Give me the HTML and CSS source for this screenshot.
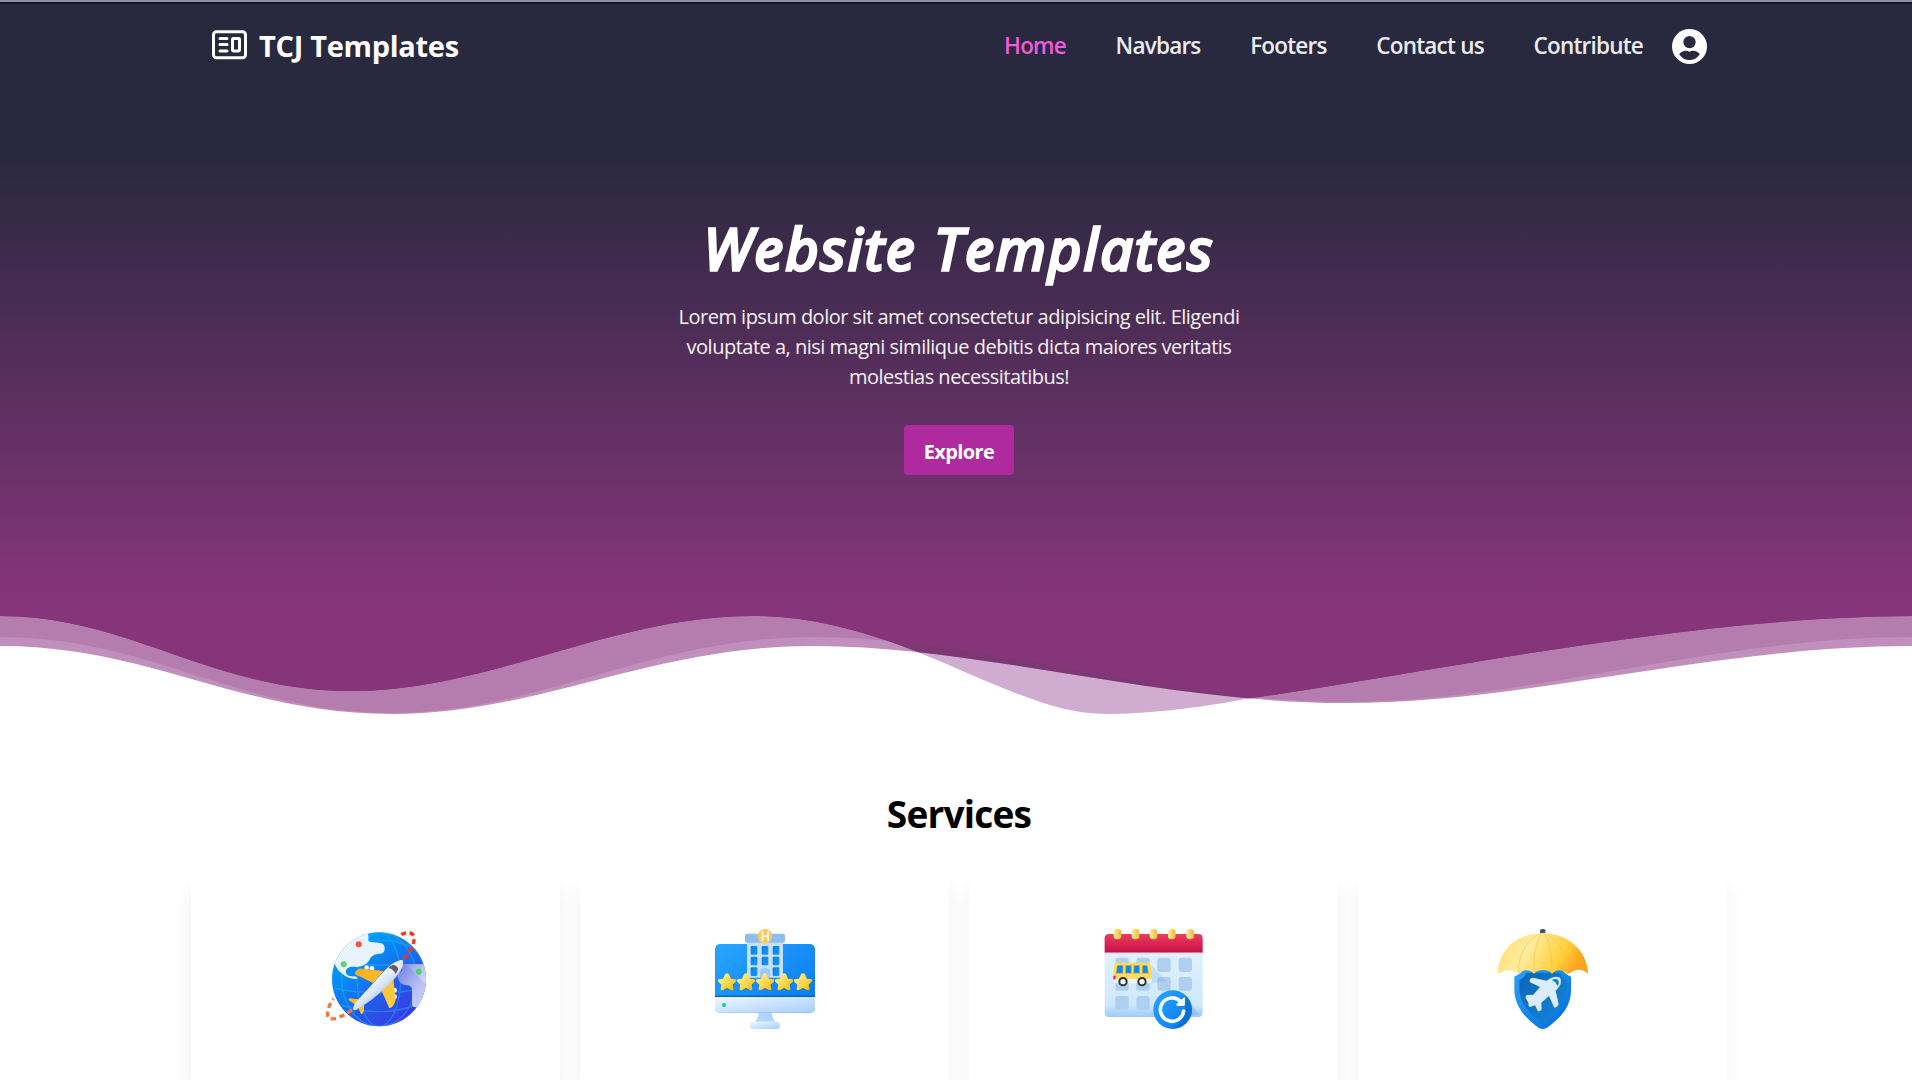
FILE: index.html
```html
<!DOCTYPE html>
<html lang="en">
<head>
<meta charset="utf-8">
<title>TCJ Templates</title>
<link rel="stylesheet" href="styles.css">
</head>
<body>
<section class="hero">
  <header class="navbar">
    <a class="brand">
      <svg class="brand-icon" viewBox="0 0 35 30" fill="none" stroke="#fff" stroke-width="3">
        <rect x="1.5" y="1.8" width="32" height="26" rx="3"/>
        <path d="M8 8.6h7M8 14.6h7M8 20.9h7" stroke-linecap="round"/>
        <rect x="20.5" y="8.5" width="7" height="12.4" rx=".8"/>
      </svg>
      <span>TCJ Templates</span>
    </a>
    <nav class="links">
      <a class="active">Home</a>
      <a>Navbars</a>
      <a>Footers</a>
      <a>Contact us</a>
      <a>Contribute</a>
    </nav>
    <svg class="avatar" viewBox="0 0 34 34">
      <circle cx="17" cy="17" r="17" fill="#fff"/>
      <circle cx="17" cy="12.7" r="6" fill="#28283e"/>
      <path d="M7 24.5C9 21 14 20.2 17 22C20 20.2 25 21 27 24.5C24.5 28.3 21 30.2 17 30.2S9.500 28.300 7 24.500Z" fill="#28283e"/>
    </svg>
  </header>
  <div class="intro">
    <h1>Website Templates</h1>
    <p>Lorem ipsum dolor sit amet consectetur adipisicing elit. Eligendi<br>voluptate a, nisi magni similique debitis dicta maiores veritatis<br>molestias necessitatibus!</p>
    <a class="button">Explore</a>
  </div>
  <svg class="waves" viewBox="0 610 1912 110" preserveAspectRatio="none">
    <defs>
      <clipPath id="front"><path d="M0 616C130 616 210 691 352 691C490 691 610 616 753 616C900 616 1010 714 1105 714C1170 714 1240 700 1246 699C1450 669 1690 617 1912 616V600H0Z"/></clipPath>
    </defs>
    <rect y="610" width="1912" height="110" fill="#fff"/>
    <path fill="#d0acd1" d="M0 616C130 616 210 691 352 691C490 691 610 616 753 616C900 616 1010 714 1105 714C1170 714 1240 700 1246 699C1450 669 1690 617 1912 616V600H0Z"/>
    <path fill="#c08fbe" d="M0 646C150 646 240 714 392 714C540 714 650 646 814 646C980 646 1160 703 1344 703C1530 703 1710 646 1912 646V600H0Z"/>
    <path fill="#b57dae" d="M0 637C150 637 240 713 392 713C540 713 650 637 814 637C980 637 1160 702 1344 702C1530 702 1710 637 1912 637V600H0Z"/>
    <g clip-path="url(#front)">
      <path fill="#7d3873" d="M0 646C150 646 240 714 392 714C540 714 650 646 814 646C980 646 1160 703 1344 703C1530 703 1710 646 1912 646V600H0Z"/>
      <path fill="#86357b" d="M0 637C150 637 240 713 392 713C540 713 650 637 814 637C980 637 1160 702 1344 702C1530 702 1710 637 1912 637V600H0Z"/>
    </g>
  </svg>
</section>

<section class="services">
  <h2>Services</h2>
  <div class="cards">
    <article class="card">
      <svg viewBox="48 57 300 300">
        <defs>
          <linearGradient id="sea" x1="0" y1="0" x2=".8" y2="1"><stop offset="0" stop-color="#00b2ff"/><stop offset=".35" stop-color="#058cf5"/><stop offset=".75" stop-color="#2b55eb"/><stop offset="1" stop-color="#4432ee"/></linearGradient>
          <linearGradient id="land" x1="0" y1="0" x2="1" y2="1"><stop offset="0" stop-color="#7d83e8"/><stop offset=".6" stop-color="#ccd6fa"/><stop offset="1" stop-color="#e4edff"/></linearGradient>
          <linearGradient id="fuselage" x1=".3" y1=".3" x2=".65" y2=".7"><stop offset="0" stop-color="#f6fbff"/><stop offset=".6" stop-color="#dce7fb"/><stop offset="1" stop-color="#a9bbe8"/></linearGradient>
          <linearGradient id="wing" x1="0" y1="0" x2="1" y2="1"><stop offset="0" stop-color="#f9aa16"/><stop offset="1" stop-color="#ffd34a"/></linearGradient>
          <clipPath id="globe"><circle cx="207" cy="208" r="141"/></clipPath>
        </defs>
        <circle cx="207" cy="208" r="141" fill="url(#sea)"/>
        <g clip-path="url(#globe)">
          <g fill="none" stroke="#18b5fa" stroke-width="4" opacity=".55">
            <ellipse cx="207" cy="208" rx="65" ry="141"/><ellipse cx="207" cy="208" rx="112" ry="141"/>
            <path d="M66 165H348M73 235Q207 262 341 235M95 285Q207 325 320 285M100 115Q207 65 315 115"/>
          </g>
          <path d="M60 50H165C176 65 176 80 175 92C184 99 196 95 211 99C230 103 227 128 214 131C191 131 183 138 178 151C168 166 153 171 138 171C121 168 108 174 108 184C107 196 118 200 132 199Q142 200 142 207Q115 209 95 190Q60 170 60 50Z" fill="#e8f3ff"/>
          <path d="M272 165Q276 161 285 162H355V292H317Q305 291 306 282V238Q303 225 288 226C266 222 258 198 266 190Q284 184 272 165Z" fill="url(#land)"/>
          <path d="M282 155L354 230V320L250 350H170L130 300L184 215L150 202Z" fill="#293ccb" opacity=".12"/>
        </g>
        <circle cx="146" cy="103" r="9" fill="#ff5339"/><circle cx="101" cy="163" r="9" fill="#62d56a"/><circle cx="326" cy="185" r="9" fill="#56cd68"/>
        <g fill="#fff"><circle cx="170" cy="173" r="7"/><circle cx="186" cy="175" r="7"/><circle cx="254" cy="241" r="7"/><circle cx="254" cy="260" r="7"/></g>
        <path d="M135 187Q145 174 158 176L221 183L189 219L134 192ZM250 206L257 270Q251 293 238 295L214 240ZM115 269Q119 262 130 266L147 268L138 286ZM145 292L162 282V301Q160 311 153 313Z" fill="url(#wing)"/>
        <path d="M130 299Q127 293 138 276L207 200Q247 152 277 149Q284 157 273 180C254 213 192 270 142 297Q134 303 130 299Z" fill="url(#fuselage)"/>
        <path d="M235 174Q241 166 250 164Q263 168 265 177L257 192Q251 177 235 174Z" fill="#6c5760"/>
        <path d="M283 147Q312 108 312 89C315 63 288 64 270 76" fill="none" stroke="#ff2f18" stroke-width="10" stroke-dasharray="15 11"/>
        <path d="M126 300C99 318 75 330 59 326C43 315 59 280 71 266" fill="none" stroke="#ff7045" stroke-width="10" stroke-dasharray="16 11"/>
      </svg>
    </article>
    <article class="card">
      <svg viewBox="45 57 300 300">
        <defs>
          <linearGradient id="screen" x1="0" y1="0" x2="1" y2="1"><stop offset="0" stop-color="#29a7ff"/><stop offset="1" stop-color="#0675ed"/></linearGradient>
          <linearGradient id="pale" x1="0" y1="0" x2="1" y2="1"><stop offset="0" stop-color="#f0f8ff"/><stop offset="1" stop-color="#a7ceff"/></linearGradient>
          <linearGradient id="star" x1="0" y1="0" x2="1" y2="1"><stop offset="0" stop-color="#fff4a8"/><stop offset=".55" stop-color="#ffd748"/><stop offset="1" stop-color="#f4b500"/></linearGradient>
          <linearGradient id="window" x1="0" y1="0" x2="1" y2="1"><stop offset="0" stop-color="#087fdf"/><stop offset="1" stop-color="#1a96ff"/></linearGradient>
          <path id="rating" d="M0-25Q4-28 7-21L12-10L25-8Q30-6 26-1L17 8L19 20Q19 27 12 24L0 18L-12 24Q-19 27-19 20L-17 8L-26-1Q-30-6-25-8L-12-10L-7-21Q-4-28 0-25Z" fill="url(#star)"/>
        </defs>
        <path d="M176 305H215Q216 324 225 335H166Q176 324 176 305Z" fill="#b0d3ff"/>
        <rect x="150" y="335" width="90" height="22" rx="10" fill="url(#pale)"/>
        <rect x="45" y="102" width="300" height="206" rx="15" fill="url(#screen)"/>
        <path d="M45 259H345V293Q345 308 330 308H60Q45 308 45 293Z" fill="url(#pale)"/><path d="M45 257H345V261H45Z" fill="#075dc3"/>
        <path d="M141 96H249V203H141Z" fill="#c6e1ff"/><rect x="135" y="71" width="120" height="27" rx="6" fill="#8dbdf1"/>
        <g fill="url(#window)"><rect x="152" y="108" width="20" height="26" rx="3"/><rect x="185" y="108" width="20" height="26" rx="3"/><rect x="218" y="108" width="20" height="26" rx="3"/><rect x="152" y="140" width="20" height="26" rx="3"/><rect x="185" y="140" width="20" height="26" rx="3"/><rect x="218" y="140" width="20" height="26" rx="3"/><rect x="152" y="172" width="20" height="26" rx="3"/><rect x="218" y="172" width="20" height="26" rx="3"/></g>
        <path d="M180 203V184Q181 174 195 174Q209 174 210 184V203Z" fill="#9bc9fc"/>
        <circle cx="195" cy="79" r="22" fill="#ffc75b"/><path d="M187 67V91M204 67V91M187 79H204" fill="none" stroke="#fff8df" stroke-width="6" stroke-linecap="round"/>
        <g fill="#003f92" opacity=".25"><circle cx="85" cy="221" r="19"/><circle cx="142" cy="221" r="19"/><circle cx="198" cy="221" r="19"/><circle cx="255" cy="221" r="19"/><circle cx="312" cy="221" r="19"/></g>
        <use href="#rating" x="81" y="216"/><use href="#rating" x="138" y="216"/><use href="#rating" x="195" y="216"/><use href="#rating" x="252" y="216"/><use href="#rating" x="309" y="216"/>
        <circle cx="72" cy="285" r="6" fill="#00d889"/>
      </svg>
    </article>
    <article class="card">
      <svg viewBox="43 57 300 300">
        <defs>
          <linearGradient id="sheet" x1="0" y1="0" x2="0" y2="1"><stop offset="0" stop-color="#e6f5ff"/><stop offset=".85" stop-color="#cfe8ff"/><stop offset="1" stop-color="#9ccafb"/></linearGradient>
          <linearGradient id="red" x1="0" y1="0" x2="0" y2="1"><stop offset="0" stop-color="#ee3b5e"/><stop offset="1" stop-color="#c51147"/></linearGradient>
          <linearGradient id="ring" x1="0" y1="0" x2="1" y2="0"><stop offset="0" stop-color="#ffef9b"/><stop offset="1" stop-color="#eebb32"/></linearGradient>
        </defs>
        <rect x="45" y="72" width="294" height="249" rx="13" fill="url(#sheet)"/>
        <path d="M58 72H326Q339 72 339 85V128H45V85Q45 72 58 72Z" fill="url(#red)"/><path d="M45 128H339" stroke="#ff91ab" stroke-width="2"/>
        <g fill="url(#ring)"><rect x="72" y="57" width="23" height="31" rx="10"/><rect x="126" y="57" width="23" height="31" rx="10"/><rect x="180" y="57" width="23" height="31" rx="10"/><rect x="235" y="57" width="23" height="31" rx="10"/><rect x="290" y="57" width="23" height="31" rx="10"/></g>
        <g fill="#aecff0"><rect x="77" y="143" width="40" height="43" rx="8"/><rect x="140" y="143" width="40" height="43" rx="8"/><rect x="203" y="143" width="40" height="43" rx="8"/><rect x="267" y="143" width="40" height="43" rx="8"/><rect x="77" y="201" width="40" height="41" rx="8"/><rect x="140" y="201" width="40" height="41" rx="8"/><rect x="203" y="201" width="40" height="41" rx="8"/><rect x="267" y="201" width="40" height="41" rx="8"/><rect x="77" y="258" width="40" height="42" rx="8"/><rect x="140" y="258" width="40" height="42" rx="8"/></g>
        <path d="M183 164L232 215L150 222Z" fill="#5c96d8" opacity=".18"/>
        <path d="M80 158H173Q183 159 184 174L186 197V214H72L71 194L74 167Q74 158 80 158Z" fill="#ffdc5b"/><path d="M72 207H186V211Q186 220 178 220H79Q71 220 71 211Z" fill="#e6f3ff"/>
        <path d="M83 166H100V190H79ZM108 166H125V190H107ZM133 166H150V190H132ZM158 166H169Q174 166 174 172L176 190H158Z" fill="#118aed" stroke="#f1ae27" stroke-width="2"/>
        <rect x="71" y="197" width="7" height="11" fill="#f02b62"/>
        <g fill="#f4f8ff" stroke="#30323c" stroke-width="6"><circle cx="100" cy="215" r="11"/><circle cx="157" cy="215" r="11"/></g>
        <path d="M288 265L330 313L294 321Z" fill="#5b9bdc" opacity=".3"/>
        <circle cx="249" cy="299" r="58" fill="url(#screen)"/><path d="M290 258Q319 292 300 325Q282 354 248 356Q276 340 284 312Z" fill="#0055b5" opacity=".4"/>
        <path d="M282 303A35 35 0 1 1 272 274" fill="none" stroke="#f4faff" stroke-width="11" stroke-linecap="round"/><path d="M283 262Q286 261 286 267V284Q285 288 280 288H264Q256 285 263 280Z" fill="#f4faff"/>
      </svg>
    </article>
    <article class="card">
      <svg viewBox="40 57 300 300">
        <defs>
          <linearGradient id="canopy" x1="0" y1="0" x2="1" y2=".25"><stop offset="0" stop-color="#ffdc74"/><stop offset=".4" stop-color="#ffec9d"/><stop offset=".8" stop-color="#ffcf38"/><stop offset="1" stop-color="#ffa420"/></linearGradient>
          <linearGradient id="shield" x1="0" y1="0" x2="1" y2="1"><stop offset="0" stop-color="#2aa2fa"/><stop offset="1" stop-color="#006bdb"/></linearGradient>
          <linearGradient id="inner" x1="0" y1="0" x2="1" y2="1"><stop offset="0" stop-color="#0965b5"/><stop offset="1" stop-color="#1686e0"/></linearGradient>
        </defs>
        <path d="M104 200Q122 193 130 180H248Q256 193 274 200V242C273 293 241 325 202 353Q189 361 177 353C133 323 105 285 104 240Z" fill="url(#shield)"/>
        <path d="M119 211Q132 205 140 188H239Q247 205 261 211V242C259 281 228 316 190 340C150 312 120 277 119 240Z" fill="url(#inner)"/>
        <path d="M181 70V61Q181 57 189 57Q197 57 197 61V70Z" fill="#48525f"/>
        <path d="M54 191C58 117 113 70 189 70S321 119 326 191C310 179 294 175 279 184Q270 192 263 191C250 179 231 175 217 191C207 178 178 175 163 191C148 177 129 178 118 192C105 179 81 178 72 184Q62 189 54 191Z" fill="url(#canopy)"/>
        <path d="M163 190C162 135 169 99 183 72M217 190C216 139 211 94 195 72M118 190C112 137 144 90 176 74M263 190C263 135 242 99 205 74" fill="none" stroke="#f3c24c" stroke-width="2"/>
        <path d="M201 212C217 198 240 196 243 207C246 220 240 231 228 242L237 283Q232 295 223 292L208 258L185 278L186 297Q180 307 174 302L166 286L151 291Q144 290 147 280L138 264Q137 254 145 255L161 254L181 231L151 217Q147 205 159 203Z" fill="#dcecff"/>
        <path d="M216 210Q233 202 237 214Q239 222 233 228Q229 215 216 210Z" fill="#087ce0"/>
      </svg>
    </article>
  </div>
</section>
</body>
</html>
```
FILE: styles.css
```css
* { box-sizing: border-box; }
html { overflow: hidden; background: #fff; }
body {
  margin: 0;
  height: 1080px;
  overflow: hidden;
  font-family: "Open Sans", "Noto Sans", sans-serif;
}
.hero {
  height: 720px;
  display: flex;
  flex-direction: column;
  color: #fff;
  border-top: 2px solid #9191a8;
  background: linear-gradient(#28283e 0, #28283e 148px, #86357b 598px);
  box-shadow: inset 0 2px #131326;
}
.navbar {
  height: 88px;
  padding: 0 205px 0 212px;
  display: flex;
  align-items: center;
}
.brand {
  display: flex;
  align-items: center;
  gap: 12px;
  margin-right: auto;
  font-size: 29px;
  font-weight: 700;
  line-height: 40px;
  letter-spacing: -.3px;
}
.brand-icon { width: 35px; height: 30px; margin-top: -2px; }
.links {
  display: flex;
  gap: 49.6px;
  font-size: 22.5px;
  font-weight: 600;
  line-height: 32px;
  letter-spacing: -.78px;
  color: #ececf0;
}
.active { color: #ec5bd8; }
.avatar { width: 35px; height: 35px; margin-left: 29px; }
.intro {
  padding: 113px 0 0 6px;
  display: flex;
  flex-direction: column;
  align-items: center;
  text-align: center;
}
h1 {
  margin: 0;
  font-size: 57px;
  line-height: 90px;
  font-style: italic;
  font-weight: 500;
  letter-spacing: 2.5px;
  -webkit-text-stroke: 3.4px #fff;
  stroke-linejoin: round;
}
p {
  margin: 9px 0 0;
  font-size: 20px;
  line-height: 30px;
  letter-spacing: -.5px;
  color: #f6f2f6;
}
.button {
  width: 110px;
  height: 50px;
  margin-top: 33px;
  border-radius: 4px;
  background: #ae2a9e;
  font-size: 20px;
  font-weight: 700;
  line-height: 53px;
  letter-spacing: -.6px;
}
.waves { display: block; width: 100%; height: 110px; margin-top: auto; }
.services {
  height: 360px;
  padding: 64px 185px 0 191px;
  overflow: hidden;
}
h2 {
  margin: 0;
  text-align: center;
  font-size: 37px;
  line-height: 60px;
  letter-spacing: -.8px;
  color: #000;
}
.cards {
  margin-top: 31px;
  display: grid;
  grid-template-columns: repeat(4, 1fr);
  gap: 20px;
}
.card {
  height: 205px;
  padding-top: 54px;
  display: flex;
  justify-content: center;
  background: #fff;
  box-shadow: 0 14px 18px rgba(0, 0, 0, .065);
}
.card svg { width: 100px; height: 100px; }
```
